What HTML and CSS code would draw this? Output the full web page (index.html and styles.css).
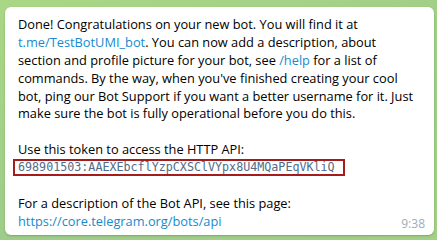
FILE: index.html
```html
<!DOCTYPE html>
<html>
<head>
  <title>BotFather</title>
  <link rel="stylesheet" href="styles.css">
</head>
<body>
  <div class="bubble">
    <p class="para">
      Done! Congratulations on your new bot. You will find it at<br>
      <a class="link" href="#">t.me/TestBotUMI_bot</a>. You can now add a description, about<br>
      section and profile picture for your bot, see <a class="link" href="#">/help</a> for a list of<br>
      commands. By the way, when you've finished creating your cool<br>
      bot, ping our Bot Support if you want a better username for it. Just<br>
      make sure the bot is fully operational before you do this.
    </p>
    <p class="para">
      Use this token to access the HTTP API:<br>
      <span class="token">698901503:AAEXEbcflYzpCXSClVYpx8U4MQaPEqVKliQ</span>
    </p>
    <p class="para">
      For a description of the Bot API, see this page:<br>
      <a class="link" href="#">https://core.telegram.org/bots/api</a>
    </p>
    <span class="time">9:38</span>
  </div>
</body>
</html>
```

FILE: styles.css
```css
body {
  margin: 0;
  padding: 7px 3px 5px 5px;
  background: linear-gradient(160deg, #a9d784, #9ecc8a 60%, #a3cf86);
  font-family: 'Open Sans', sans-serif;
  height: 240px;
  box-sizing: border-box;
  overflow: hidden;
}

.bubble {
  position: relative;
  background: #ffffff;
  border-radius: 6px;
  box-shadow: 0 1px 2px rgba(60, 100, 40, 0.35);
  padding: 9px 9px 0 13px;
  height: 228px;
  box-sizing: border-box;
  font-size: 12.8px;
  line-height: 17.87px;
  color: #000000;
}

.para {
  margin: 0 0 17.87px 0;
  white-space: nowrap;
}

.link {
  color: #168acd;
  text-decoration: none;
}

.token {
  display: inline-block;
  font-family: 'DejaVu Sans Mono', monospace;
  font-size: 11.7px;
  line-height: 13px;
  color: #4f6b87;
  border: 2px solid #a51c1c;
  padding: 0 8px 0 3px;
  margin-left: -5px;
  vertical-align: top;
}

/* message time sits over the bubble's bottom-right corner */
.time {
  position: absolute;
  right: 9px;
  bottom: 4px;
  font-size: 12px;
  color: #a0acb6;
  line-height: 14px;
}
```
